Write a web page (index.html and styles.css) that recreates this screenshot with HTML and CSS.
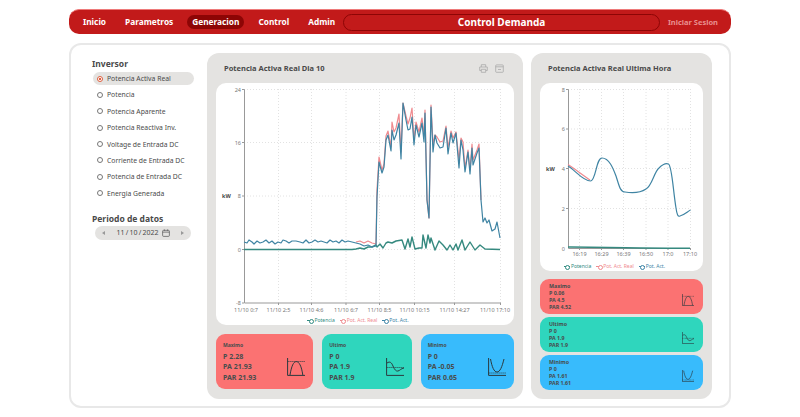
FILE: index.html
```html
<!DOCTYPE html>
<html lang="en">
<head>
    <meta charset="UTF-8">
    <meta name="viewport" content="width=device-width, initial-scale=1.0">
    <title>Control Demanda</title>
    <link rel="stylesheet" href="styles.css">
</head>
<body>
<svg class="defs" aria-hidden="true">
    <symbol id="ico-max" viewBox="0 0 18 18">
        <path d="M.6 0V17.4H18" class="ico-line"/>
        <path d="M3 17C4.500 8 6.500 3.600 9.300 3.600S14.500 8 15.800 17" class="ico-line"/>
        <path d="M.6 3.500H18" class="ico-dots"/>
    </symbol>
    <symbol id="ico-last" viewBox="0 0 18 18">
        <path d="M.6 0V17.400H18" class="ico-line"/>
        <path d="M1 5C4 3 5.500 4.500 7 8S10 13.500 12 13 15 10.500 18 10" class="ico-line"/>
        <path d="M.6 9.500H18" class="ico-dots"/>
    </symbol>
    <symbol id="ico-min" viewBox="0 0 18 18">
        <path d="M.6 0V17.400H18" class="ico-line"/>
        <path d="M2.500 1C4 9 6 14 9 14S14 9 16 1" class="ico-line"/>
        <path d="M.6 15H18" class="ico-dots"/>
    </symbol>
</svg>

<header class="topbar">
    <nav class="menu">
        <a href="#">Inicio</a>
        <a href="#">Parametros</a>
        <a href="#" class="active">Generacion</a>
        <a href="#">Control</a>
        <a href="#">Admin</a>
    </nav>
    <div class="app-title">Control Demanda</div>
    <a href="#" class="login">Iniciar Sesion</a>
</header>

<main class="main-card">
    <aside class="side">
        <h2>Inversor</h2>
        <ul class="options">
            <li class="selected"><span class="radio"></span>Potencia Activa Real</li>
            <li><span class="radio"></span>Potencia</li>
            <li><span class="radio"></span>Potencia Aparente</li>
            <li><span class="radio"></span>Potencia Reactiva Inv.</li>
            <li><span class="radio"></span>Voltage de Entrada DC</li>
            <li><span class="radio"></span>Corriente de Entrada DC</li>
            <li><span class="radio"></span>Potencia de Entrada DC</li>
            <li><span class="radio"></span>Energia Generada</li>
        </ul>
        <h2 class="period">Periodo de datos</h2>
        <div class="date-pick">
            <span class="arrow-left"></span>
            <span class="date-text">11 / 10 / 2022
                <svg width="8" height="8" viewBox="0 0 9 9"><rect x=".7" y="1.500" width="7.600" height="6.800" rx="1" class="cal"/><path d="M.7 3.500H8.300M2.700 .5V2M6.300 .5V2" class="cal"/></svg>
            </span>
            <span class="arrow-right"></span>
        </div>
    </aside>

    <section class="panel panel-day">
        <div class="panel-head">
            <h3>Potencia Activa Real Dia 10</h3>
            <div class="tools">
                <svg width="9" height="9" viewBox="0 0 9 9"><path d="M2.300 3V.7H6.700V3M2.300 6.500H.7V3H8.300V6.500H6.700M2.300 5.300H6.700V8.300H2.300Z" class="tool"/></svg>
                <svg width="9" height="9" viewBox="0 0 9 9"><rect x=".7" y=".9" width="7.600" height="7.400" rx=".8" class="tool"/><path d="M.7 2.800H8.300M3 5.500H6" class="tool"/></svg>
            </div>
        </div>
        <div class="chart-card">
            <svg class="chart" viewBox="216 83 298 230">
                <g class="grid">
                    <path d="M244 89.500H501M244 142.500H501M244 196H501M244 249.500H501"/>
                    <path d="M278.500 89V303M311.500 89V303M346 89V303M379.500 89V303M414.500 89V303M454.500 89V303M500.500 89V303"/>
                </g>
                <path class="axis" d="M242 89.500H244.500V303H501M242 142.500H244M242 196H244M242 249.500H244M242 303H244M278.500 303V305M311.500 303V305M346 303V305M379.500 303V305M414.500 303V305M454.500 303V305M500.500 303V305"/>
                <g class="tick-y">
                    <text x="241" y="91.500">24</text>
                    <text x="241" y="144.500">16</text>
                    <text x="241" y="198">8</text>
                    <text x="241" y="251.500">0</text>
                    <text x="241" y="304.500">-8</text>
                </g>
                <g class="tick-x">
                    <text x="246" y="312">11/10 0:7</text>
                    <text x="278.500" y="312">11/10 2:5</text>
                    <text x="311.500" y="312">11/10 4:6</text>
                    <text x="346" y="312">11/10 6:7</text>
                    <text x="379.500" y="312">11/10 8:5</text>
                    <text x="414.500" y="312">11/10 10:15</text>
                    <text x="454.500" y="312">11/10 14:27</text>
                    <text x="495" y="312">11/10 17:10</text>
                </g>
                <text class="unit" x="222" y="198">kW</text>

                <polyline class="s-red" points="356,242 360,241 364,243 368,241 372,243 376,244 377,190 379,157 382,170 384,164 386,136 388,131 391,147 392,122 394,132 396,128 399,114 401,152 403,103 406,116 408,124 410,118 412,108 414,140 416,122 419,132 422,118 424,136 425,110 427,200 429,218 431,105 433,144 435,135 437,137 440,142 443,141 446,126 448,148 451,131 453,138 456,132 459,160 461,138 463,142 465,168 468,150 470,170 472,144 473,160 477,150 479,144 481,200"/>
                <polyline class="s-green" points="244,249.500 352,249.500 356,249 360,248 364,249 368,247 372,247 376,245 377,247 380,244 383,248 386,243 388,242 392,243 396,241 402,240 405,249 408,239 410,247 412,237 415,249 419,248 422,248 423,235 426,248 428,235 430,243 431,238 435,250 439,241 443,245 447,250 450,245 453,250 456,244 458,250 462,240 465,250 470,242 475,250 480,245 485,249 500,249.500"/>
                <polyline class="s-blue" points="244,242 247,243 249,240 252,242 254,244 257,241 260,243 263,242 266,240 269,243 272,241 275,244 278,242 281,243 283,240 286,241 289,243 292,241 296,241 300,242 303,243 306,240 309,243 312,242 315,240 318,242 321,241 324,242 327,243 330,240 333,242 336,241 339,243 342,240 345,242 348,241 352,242 356,243 360,244 364,246 368,245 372,247 376,246 377,197 379,162 382,173 384,167 386,140 388,135 391,151 392,130 394,140 396,135 399,123 401,159 403,103 406,120 408,130 410,129 412,117 414,145 416,125 419,137 422,123 424,142 425,113 427,200 429,218 431,107 433,152 435,135 437,143 440,148 443,147 446,128 448,154 451,133 453,143 456,133 459,168 461,140 463,150 465,172 468,152 470,174 472,148 473,165 477,153 479,148 481,200 483,222 485,218 487,223 489,220 492,231 495,229 497,222 500,238"/>
            </svg>
            <div class="legend">
                <span class="leg leg-green">Potencia</span>
                <span class="leg leg-red">Pot. Act. Real</span>
                <span class="leg leg-blue">Pot. Act.</span>
            </div>
        </div>
        <div class="stats-row">
            <div class="stat stat-max stat-a">
                <div class="stat-text"><h4>Maximo</h4><p>P 2.28</p><p>PA 21.93</p><p>PAR 21.93</p></div>
                <svg class="stat-ico"><use href="#ico-max"/></svg>
            </div>
            <div class="stat stat-last stat-b">
                <div class="stat-text"><h4>Ultimo</h4><p>P 0</p><p>PA 1.9</p><p>PAR 1.9</p></div>
                <svg class="stat-ico"><use href="#ico-last"/></svg>
            </div>
            <div class="stat stat-min stat-c">
                <div class="stat-text"><h4>Minimo</h4><p>P 0</p><p>PA -0.05</p><p>PAR 0.65</p></div>
                <svg class="stat-ico"><use href="#ico-min"/></svg>
            </div>
        </div>
    </section>

    <section class="panel panel-hour">
        <div class="panel-head">
            <h3>Potencia Activa Real Ultima Hora</h3>
        </div>
        <div class="chart-card chart-card-small">
            <svg class="chart" viewBox="540 83 163 176">
                <g class="grid">
                    <path d="M568 89.500H691M568 129H691M568 168.500H691M568 208.500H691"/>
                    <path d="M579.500 89V248M601.500 89V248M623.500 89V248M646 89V248M668 89V248M690.500 89V248"/>
                </g>
                <path class="axis" d="M566 89.500H568.500V248.500H691M566 129H568M566 168.500H568M566 208.500H568M579.500 248V250M601.500 248V250M623.500 248V250M646 248V250M668 248V250M690.500 248V250"/>
                <g class="tick-y">
                    <text x="565" y="91.500">8</text>
                    <text x="565" y="131">6</text>
                    <text x="565" y="170.500">4</text>
                    <text x="565" y="210.500">2</text>
                    <text x="565" y="250.500">0</text>
                </g>
                <g class="tick-x">
                    <text x="579.500" y="256">16:19</text>
                    <text x="601.500" y="256">16:29</text>
                    <text x="623.500" y="256">16:39</text>
                    <text x="646" y="256">16:50</text>
                    <text x="668" y="256">17:0</text>
                    <text x="690" y="256">17:10</text>
                </g>
                <text class="unit" x="546" y="171">kW</text>
                <path class="s-red" d="M568 164.500C575 169 584 176 590 180"/>
                <path class="s-green" d="M568 247C600 247.500 650 248.300 690 248.300"/>
                <path class="s-blue" d="M568 166C575 170 583 181 590.500 181C596 181 596 158 602 158C609 158 613 168 616 176C619 185 620 192 625 192C631 193 640 193 646 189C652 186 654 172 659 168C662 165 666 163 668.500 164C672 166 673 190 676 208C677 215 678 217 680 216C684 215 687 212 690.500 210"/>
            </svg>
            <div class="legend">
                <span class="leg leg-green">Potencia</span>
                <span class="leg leg-red">Pot. Act. Real</span>
                <span class="leg leg-blue">Pot. Act.</span>
            </div>
        </div>
        <div class="stats-col">
            <div class="stat stat-max">
                <div class="stat-text"><h4>Maximo</h4><p>P 0.06</p><p>PA 4.5</p><p>PAR 4.52</p></div>
                <svg class="stat-ico"><use href="#ico-max"/></svg>
            </div>
            <div class="stat stat-last">
                <div class="stat-text"><h4>Ultimo</h4><p>P 0</p><p>PA 1.9</p><p>PAR 1.9</p></div>
                <svg class="stat-ico"><use href="#ico-last"/></svg>
            </div>
            <div class="stat stat-min">
                <div class="stat-text"><h4>Minimo</h4><p>P 0</p><p>PA 1.61</p><p>PAR 1.61</p></div>
                <svg class="stat-ico"><use href="#ico-min"/></svg>
            </div>
        </div>
    </section>
</main>
</body>
</html>
```

FILE: styles.css
```css
* {
    box-sizing: border-box;
}
body {
    margin: 0;
    padding: 9px 69px 0;
    background-color: #fff;
    font-family: 'Noto Sans', sans-serif;
    color: #4a4a4a;
    overflow: hidden;
}
h2, h3, h4, p, ul {
    margin: 0;
    padding: 0;
}
.defs {
    position: absolute;
    width: 0;
    height: 0;
}

/* top bar */
.topbar {
    display: flex;
    align-items: center;
    height: 25px;
    width: 662px;
    padding: 0 13px 0 9px;
    background-color: #c21a1a;
    border-top: 1px solid #ee7a7a;
    border-radius: 10px;
}
.menu {
    display: flex;
    align-items: center;
    gap: 9px;
}
.menu a {
    padding: 2px 5px;
    color: #fff;
    font-size: 8.3px;
    font-weight: 700;
    text-decoration: none;
    line-height: 10px;
}
.menu a.active {
    background-color: #8d0505;
    border-radius: 8px;
}
.app-title {
    flex: 1;
    height: 17px;
    margin: 0 8px 0 3px;
    border: 1px solid #8d0505;
    border-radius: 9px;
    color: #fff;
    font-size: 10px;
    font-weight: 700;
    line-height: 15px;
    text-align: center;
}
.login {
    color: #e98f8f;
    font-size: 7.5px;
    font-weight: 700;
    text-decoration: none;
}

/* main card */
.main-card {
    display: flex;
    width: 662px;
    height: 365px;
    margin-top: 9px;
    padding: 8px 16px 7px 21px;
    border: 2px solid #e8e8e8;
    border-radius: 12px;
}
.side {
    width: 115px;
    padding-top: 5px;
}
.side h2 {
    font-size: 8.5px;
    font-weight: 700;
    line-height: 11px;
}
.options {
    list-style: none;
    margin-top: 3px;
}
.options li {
    display: flex;
    align-items: center;
    gap: 4px;
    width: 101px;
    height: 13px;
    margin: 0 0 3.4px 1px;
    padding-left: 4px;
    font-size: 6.8px;
    white-space: nowrap;
}
.options li.selected {
    background-color: #e4e3e1;
    border-radius: 7px;
}
.radio {
    flex: none;
    width: 6px;
    height: 6px;
    border: 1px solid #777;
    border-radius: 50%;
}
.selected .radio {
    border-color: #e0603f;
    background: radial-gradient(circle, #e0603f 0 1px, #fff 1.5px);
}
.side h2.period {
    margin-top: 13px;
}
.date-pick {
    display: flex;
    align-items: center;
    justify-content: space-between;
    width: 96px;
    height: 14px;
    margin: 2px 0 0 3px;
    padding: 0 7px;
    background-color: #e4e3e1;
    border-radius: 7px;
}
.date-text {
    display: flex;
    align-items: center;
    gap: 3px;
    font-size: 7px;
    word-spacing: -.6px;
    white-space: nowrap;
}
.arrow-left, .arrow-right {
    width: 0;
    height: 0;
    border-top: 2px solid transparent;
    border-bottom: 2px solid transparent;
}
.arrow-left {
    border-right: 3px solid #999;
}
.arrow-right {
    border-left: 3px solid #999;
}
.cal {
    fill: none;
    stroke: #555;
    stroke-width: .8;
}

/* panels */
.panel {
    padding: 0 9px;
    height: 346px;
    background-color: #e4e3e1;
    border-radius: 12px;
}
.panel-day {
    width: 316px;
    margin-right: 8px;
}
.panel-hour {
    width: 181px;
}
.panel-head {
    display: flex;
    align-items: center;
    justify-content: space-between;
    height: 30px;
    padding: 0 8px;
}
.panel-head h3 {
    font-size: 7.5px;
    font-weight: 700;
    white-space: nowrap;
}
.tools {
    display: flex;
    gap: 7px;
    margin-right: 2px;
}
.tool {
    fill: none;
    stroke: #aaa;
    stroke-width: .8;
}
.chart-card {
    height: 242px;
    background-color: #fff;
    border-radius: 10px;
}
.chart-card-small {
    height: 188px;
}
.chart {
    display: block;
    width: 100%;
    height: calc(100% - 12px);
}
.grid path {
    fill: none;
    stroke: #e2e2e2;
    stroke-width: 1;
    stroke-dasharray: 1 2;
}
.axis {
    fill: none;
    stroke: #999;
    stroke-width: 1;
}
.tick-y text, .tick-x text, .unit {
    font-family: 'Noto Sans', sans-serif;
    font-size: 5.5px;
    fill: #777;
}
.tick-y text {
    text-anchor: end;
}
.tick-x text {
    text-anchor: middle;
}
.unit {
    font-weight: 700;
    fill: #444;
}
.s-green, .s-red, .s-blue {
    fill: none;
    stroke-width: 1.2;
    stroke-linejoin: round;
}
.s-green {
    stroke: #35897f;
    stroke-width: 1.4;
}
.s-red {
    stroke: #ef8a8f;
}
.s-blue {
    stroke: #3f84a3;
}
.legend {
    display: flex;
    justify-content: center;
    gap: 5px;
    height: 12px;
    padding-right: 14px;
    font-size: 5px;
    line-height: 14px;
}
.leg {
    position: relative;
    padding-left: 7px;
}
.leg::before {
    content: "";
    position: absolute;
    left: 0;
    top: 7px;
    width: 6px;
    border-top: 1px solid currentColor;
}
.leg::after {
    content: "";
    position: absolute;
    left: 1.500px;
    top: 6px;
    width: 3px;
    height: 3px;
    background-color: #fff;
    border: 1px solid currentColor;
    border-radius: 50%;
}
.leg-green {
    color: #2f8a80;
}
.leg-red {
    color: #ef8a8f;
}
.leg-blue {
    color: #3b83a6;
}

/* stat cards */
.stats-row {
    display: flex;
    gap: 9px;
    margin-top: 9px;
}
.stats-col {
    display: flex;
    flex-direction: column;
    gap: 3px;
    margin-top: 8px;
}
.stat {
    display: flex;
    align-items: flex-end;
    justify-content: space-between;
    border-radius: 9px;
    color: #484d4d;
}
.stat-max {
    background-color: #fb7272;
}
.stat-last {
    background-color: #2fd6bd;
}
.stat-min {
    background-color: #38bbfc;
}
.stats-row .stat {
    height: 55px;
    padding: 8px 8px 6px 7px;
}
.stat-a {
    width: 98px;
}
.stat-b {
    width: 90px;
}
.stat-c {
    width: 94px;
}
.stat h4 {
    font-weight: 700;
}
.stats-row h4 {
    font-size: 5px;
    line-height: 8px;
    margin-bottom: 3px;
}
.stats-row p {
    font-size: 7px;
    font-weight: 700;
    line-height: 10.500px;
}
.stat-ico {
    flex: none;
    overflow: visible;
}
.stats-row .stat-ico {
    width: 18px;
    height: 18px;
    margin-bottom: 7px;
}
.stats-col .stat {
    height: 35px;
    padding: 3px 9px 3px 9px;
}
.stats-col h4 {
    font-size: 5.3px;
    line-height: 7px;
}
.stats-col p {
    font-size: 5.3px;
    font-weight: 700;
    line-height: 7px;
}
.stats-col .stat-ico {
    width: 12px;
    height: 12px;
    margin-bottom: 5px;
}
.ico-line {
    fill: none;
    stroke: #2b3a3f;
    stroke-width: 1;
}
.ico-dots {
    fill: none;
    stroke: #2b3a3f;
    stroke-width: 1;
    stroke-dasharray: 1 1;
}
```
